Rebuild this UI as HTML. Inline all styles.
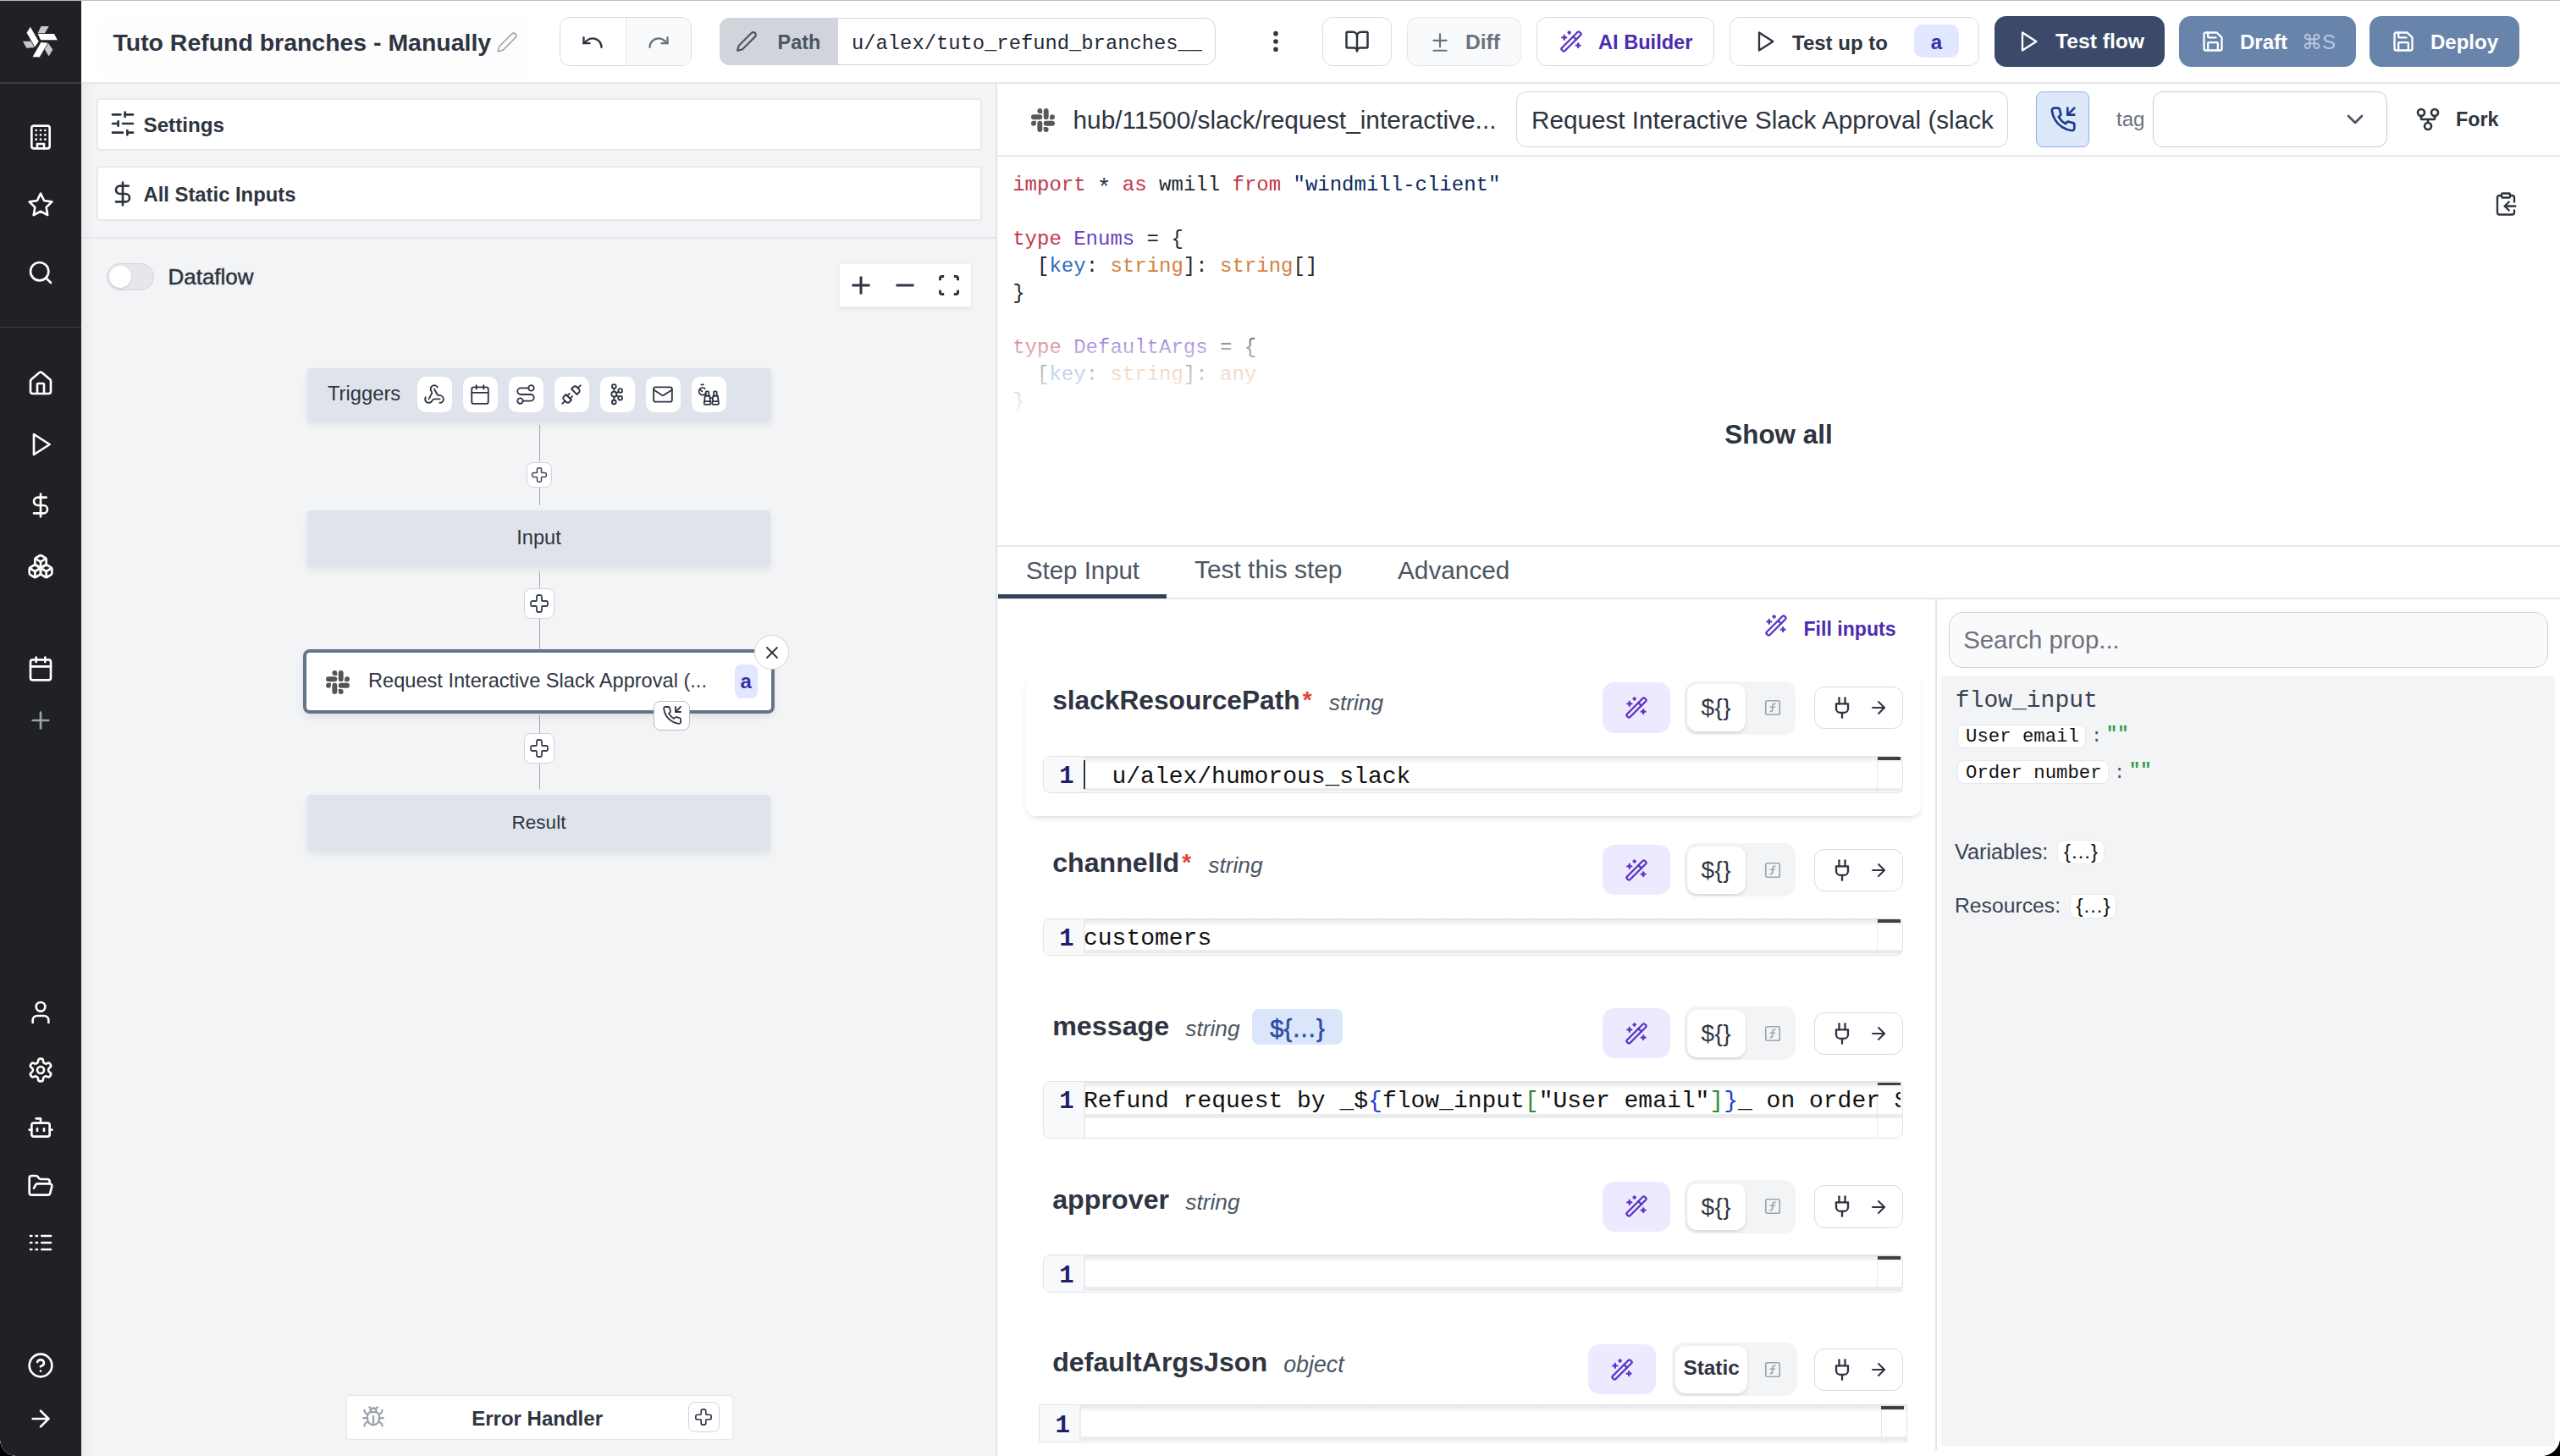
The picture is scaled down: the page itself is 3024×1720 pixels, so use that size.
<!DOCTYPE html>
<html><head><meta charset="utf-8">
<style>
html,body{margin:0;padding:0;background:#000;overflow:hidden;}
body{width:3024px;height:1720px;}
#app{position:relative;width:3024px;height:1720px;overflow:hidden;border-radius:0 0 22px 20px;font-family:"Liberation Sans",sans-serif;color:#2e3440;background:#fff;}
.a{position:absolute;}
svg{display:block;overflow:visible;}
.ic{fill:none;stroke:currentColor;stroke-linecap:round;stroke-linejoin:round;}
.t{white-space:pre;line-height:1;}
</style></head>
<body><div id="app">
<div class="a" style="box-sizing:border-box;left:0px;top:0px;width:3024px;height:1720px;background:#fff;border-radius:0px;"></div>
<div class="a" style="box-sizing:border-box;left:96px;top:98px;width:1081px;height:1622px;background:#f3f4f6;border-radius:0px;"></div>
<div class="a" style="box-sizing:border-box;left:1176px;top:98px;width:2px;height:1622px;background:#e1e3e6;border-radius:0px;"></div>
<div class="a" style="box-sizing:border-box;left:96px;top:98px;width:16px;height:1622px;background:transparent;border-radius:0px;background:linear-gradient(to right, rgba(0,0,0,.035), rgba(0,0,0,0));"></div>
<div class="a" style="box-sizing:border-box;left:0px;top:0px;width:96px;height:1720px;background:#202124;border-radius:0px;border-bottom-left-radius:18px;"></div>
<svg class="a" style="left:24px;top:24px" width="48" height="48" viewBox="0 0 24 24"><g id="wmlogo"><polygon points="10.29,7.98 19.96,7.98 21.93,11.6 12.04,11.6" fill="#fff"/><polygon points="10.29,7.65 12.26,3.47 16.88,3.47 14.46,7.65" fill="#c9c9c9"/></g><use href="#wmlogo" transform="rotate(120 11.71 12.37)"/><use href="#wmlogo" transform="rotate(240 11.71 12.37)"/></svg>
<div class="a" style="box-sizing:border-box;left:0px;top:97px;width:96px;height:2px;background:#3d3e44;border-radius:0px;"></div>
<div class="a" style="box-sizing:border-box;left:0px;top:386px;width:96px;height:1px;background:#3d3e44;border-radius:0px;"></div>
<svg class="a ic" style="left:32px;top:146px;color:#fff;stroke-width:2;" width="32" height="32" viewBox="0 0 24 24"><rect width="16" height="20" x="4" y="2" rx="2" ry="2"/><path d="M9 22v-4h6v4"/><path d="M8 6h.01"/><path d="M16 6h.01"/><path d="M12 6h.01"/><path d="M12 10h.01"/><path d="M12 14h.01"/><path d="M16 10h.01"/><path d="M16 14h.01"/><path d="M8 10h.01"/><path d="M8 14h.01"/></svg>
<svg class="a ic" style="left:32px;top:226px;color:#fff;stroke-width:2;" width="32" height="32" viewBox="0 0 24 24"><polygon points="12 2 15.09 8.26 22 9.27 17 14.14 18.18 21.02 12 17.77 5.82 21.02 7 14.14 2 9.27 8.91 8.26 12 2"/></svg>
<svg class="a ic" style="left:32px;top:306px;color:#fff;stroke-width:2;" width="32" height="32" viewBox="0 0 24 24"><circle cx="11" cy="11" r="8"/><path d="m21 21-4.3-4.3"/></svg>
<svg class="a ic" style="left:32px;top:437.2px;color:#fff;stroke-width:2;" width="32" height="32" viewBox="0 0 24 24"><path d="M15 21v-8a1 1 0 0 0-1-1h-4a1 1 0 0 0-1 1v8"/><path d="M3 10a2 2 0 0 1 .709-1.528l7-5.999a2 2 0 0 1 2.582 0l7 5.999A2 2 0 0 1 21 10v9a2 2 0 0 1-2 2H5a2 2 0 0 1-2-2z"/></svg>
<svg class="a ic" style="left:32px;top:508.6px;color:#fff;stroke-width:2;" width="32" height="32" viewBox="0 0 24 24"><polygon points="6 3 20 12 6 21 6 3"/></svg>
<svg class="a ic" style="left:32px;top:580.8px;color:#fff;stroke-width:2;" width="32" height="32" viewBox="0 0 24 24"><line x1="12" x2="12" y1="2" y2="22"/><path d="M17 5H9.5a3.5 3.5 0 0 0 0 7h5a3.5 3.5 0 0 1 0 7H6"/></svg>
<svg class="a ic" style="left:32px;top:653px;color:#fff;stroke-width:2;" width="32" height="32" viewBox="0 0 24 24"><path d="M2.97 12.92A2 2 0 0 0 2 14.63v3.24a2 2 0 0 0 .97 1.71l3 1.8a2 2 0 0 0 2.06 0L12 19v-5.5l-5-3-4.03 2.42Z"/><path d="m7 16.5-4.74-2.85"/><path d="m7 16.5 5-3"/><path d="M7 16.5v5.17"/><path d="M12 13.5V19l3.970 2.38a2 2 0 0 0 2.06 0l3-1.8a2 2 0 0 0 .97-1.710v-3.24a2 2 0 0 0-.97-1.71L17 10.5l-5 3Z"/><path d="m17 16.5-5-3"/><path d="m17 16.5 4.74-2.85"/><path d="M17 16.5v5.17"/><path d="M7.97 4.42A2 2 0 0 0 7 6.13v4.37l5 3 5-3V6.13a2 2 0 0 0-.97-1.71l-3-1.8a2 2 0 0 0-2.06 0l-3 1.8Z"/><path d="M12 8 7.26 5.15"/><path d="m12 8 4.74-2.85"/><path d="M12 13.5V8"/></svg>
<svg class="a ic" style="left:32px;top:774px;color:#fff;stroke-width:2;" width="32" height="32" viewBox="0 0 24 24"><path d="M8 2v4"/><path d="M16 2v4"/><rect width="18" height="18" x="3" y="4" rx="2"/><path d="M3 10h18"/></svg>
<svg class="a ic" style="left:32px;top:835.4px;color:#9ca3af;stroke-width:2;" width="32" height="32" viewBox="0 0 24 24"><path d="M5 12h14"/><path d="M12 5v14"/></svg>
<svg class="a ic" style="left:32px;top:1180px;color:#fff;stroke-width:2;" width="32" height="32" viewBox="0 0 24 24"><path d="M19 21v-2a4 4 0 0 0-4-4H9a4 4 0 0 0-4 4v2"/><circle cx="12" cy="7" r="4"/></svg>
<svg class="a ic" style="left:32px;top:1247.6px;color:#fff;stroke-width:2;" width="32" height="32" viewBox="0 0 24 24"><path d="M12.22 2h-.44a2 2 0 0 0-2 2v.18a2 2 0 0 1-1 1.73l-.43.25a2 2 0 0 1-2 0l-.15-.08a2 2 0 0 0-2.73.73l-.22.38a2 2 0 0 0 .73 2.73l.15.1a2 2 0 0 1 1 1.72v.51a2 2 0 0 1-1 1.74l-.15.09a2 2 0 0 0-.73 2.730l.22.38a2 2 0 0 0 2.73.73l.15-.08a2 2 0 0 1 2 0l.43.25a2 2 0 0 1 1 1.73V20a2 2 0 0 0 2 2h.44a2 2 0 0 0 2-2v-.18a2 2 0 0 1 1-1.73l.43-.25a2 2 0 0 1 2 0l.15.08a2 2 0 0 0 2.73-.73l.22-.39a2 2 0 0 0-.73-2.73l-.15-.08a2 2 0 0 1-1-1.74v-.5a2 2 0 0 1 1-1.74l.15-.09a2 2 0 0 0 .73-2.73l-.22-.38a2 2 0 0 0-2.73-.73l-.15.08a2 2 0 0 1-2 0l-.43-.25a2 2 0 0 1-1-1.73V4a2 2 0 0 0-2-2z"/><circle cx="12" cy="12" r="3"/></svg>
<svg class="a ic" style="left:32px;top:1316px;color:#fff;stroke-width:2;" width="32" height="32" viewBox="0 0 24 24"><path d="M12 8V4H8"/><rect width="16" height="12" x="4" y="8" rx="2"/><path d="M2 14h2"/><path d="M20 14h2"/><path d="M15 13v2"/><path d="M9 13v2"/></svg>
<svg class="a ic" style="left:32px;top:1384.8px;color:#fff;stroke-width:2;" width="32" height="32" viewBox="0 0 24 24"><path d="m6 14 1.5-2.9A2 2 0 0 1 9.24 10H20a2 2 0 0 1 1.94 2.5l-1.54 6a2 2 0 0 1-1.95 1.5H4a2 2 0 0 1-2-2V5a2 2 0 0 1 2-2h3.9a2 2 0 0 1 1.69.9l.81 1.2a2 2 0 0 0 1.67.9H18a2 2 0 0 1 2 2v2"/></svg>
<svg class="a ic" style="left:32px;top:1452px;color:#fff;stroke-width:2;" width="32" height="32" viewBox="0 0 24 24"><path d="M13 12h8"/><path d="M13 18h8"/><path d="M13 6h8"/><path d="M3 12h1"/><path d="M3 18h1"/><path d="M3 6h1"/><path d="M8 12h1"/><path d="M8 18h1"/><path d="M8 6h1"/></svg>
<svg class="a ic" style="left:32px;top:1597.4px;color:#fff;stroke-width:2;" width="32" height="32" viewBox="0 0 24 24"><circle cx="12" cy="12" r="10"/><path d="M9.09 9a3 3 0 0 1 5.83 1c0 2-3 3-3 3"/><path d="M12 17h.01"/></svg>
<svg class="a ic" style="left:32px;top:1659.8px;color:#fff;stroke-width:2;" width="32" height="32" viewBox="0 0 24 24"><path d="M5 12h14"/><path d="m12 5 7 7-7 7"/></svg>
<div class="a" style="box-sizing:border-box;left:96px;top:96.5px;width:2928px;height:2px;background:#e6e7ea;border-radius:0px;"></div>
<div class="a" style="box-sizing:border-box;left:116px;top:22px;width:510px;height:70px;background:#fdfdfe;border-radius:12px;"></div>
<div class="a t" style="left:133.5px;top:35.52px;font-size:28.44px;font-weight:700;color:#2e3440;font-family:'Liberation Sans',sans-serif;">Tuto Refund branches - Manually</div>
<svg class="a ic" style="left:586px;top:37.4px;color:#a3a7ae;stroke-width:1.5;" width="26" height="26" viewBox="0 0 24 24"><path d="M21.174 6.812a1 1 0 0 0-3.986-3.987L3.842 16.174a2 2 0 0 0-.5.83l-1.321 4.352a.5.5 0 0 0 .623.622l4.353-1.32a2 2 0 0 0 .83-.497z"/></svg>
<div class="a" style="box-sizing:border-box;left:661px;top:20px;width:156px;height:58px;background:#fff;border-radius:12px;border:1px solid #d9dce1;"></div>
<div class="a" style="box-sizing:border-box;left:739px;top:21px;width:77px;height:56px;background:#f9fafb;border-radius:0px;border-radius:0 12px 12px 0;"></div>
<div class="a" style="box-sizing:border-box;left:738.5px;top:21px;width:1px;height:56px;background:#e5e7eb;border-radius:0px;"></div>
<svg class="a ic" style="left:685.5px;top:36px;color:#2e3440;stroke-width:2;" width="28" height="28" viewBox="0 0 24 24"><path d="M3 7v6h6"/><path d="M21 17a9 9 0 0 0-9-9 9 9 0 0 0-6 2.3L3 13"/></svg>
<svg class="a ic" style="left:763.5px;top:36px;color:#6b7280;stroke-width:2;" width="28" height="28" viewBox="0 0 24 24"><path d="M21 7v6h-6"/><path d="M3 17a9 9 0 0 1 9-9 9 9 0 0 1 6 2.3l3 2.7"/></svg>
<div class="a" style="box-sizing:border-box;left:850px;top:21px;width:586px;height:56px;background:#fff;border-radius:12px;border:1px solid #d1d5db;"></div>
<div class="a" style="box-sizing:border-box;left:850px;top:21px;width:139.5px;height:56px;background:#d1d5db;border-radius:0px;border-radius:12px 0 0 12px;"></div>
<svg class="a ic" style="left:869px;top:36px;color:#4b5563;stroke-width:2;" width="26" height="26" viewBox="0 0 24 24"><path d="M21.174 6.812a1 1 0 0 0-3.986-3.987L3.842 16.174a2 2 0 0 0-.5.83l-1.321 4.352a.5.5 0 0 0 .623.622l4.353-1.32a2 2 0 0 0 .83-.497z"/></svg>
<div class="a t" style="left:918.5px;top:38.76px;font-size:23.44px;font-weight:700;color:#4b5563;font-family:'Liberation Sans',sans-serif;">Path</div>
<div class="a t" style="left:1006px;top:40.36px;font-size:23.8px;font-weight:400;color:#1f2937;font-family:'Liberation Mono',monospace;">u/alex/tuto_refund_branches__</div>
<svg class="a ic" style="left:1491px;top:33px;color:#2e3440;stroke-width:2.2;" width="32" height="32" viewBox="0 0 24 24"><circle cx="12" cy="12" r="1"/><circle cx="12" cy="5" r="1"/><circle cx="12" cy="19" r="1"/></svg>
<div class="a" style="box-sizing:border-box;left:1562px;top:20px;width:82px;height:58px;background:#fff;border-radius:12px;border:1px solid #d9dce1;"></div>
<svg class="a ic" style="left:1588px;top:34px;color:#2e3440;stroke-width:2;" width="30" height="30" viewBox="0 0 24 24"><path d="M12 7v14"/><path d="M3 18a1 1 0 0 1-1-1V4a1 1 0 0 1 1-1h5a4 4 0 0 1 4 4 4 4 0 0 1 4-4h5a1 1 0 0 1 1 1v13a1 1 0 0 1-1 1h-6a3 3 0 0 0-3 3 3 3 0 0 0-3-3z"/></svg>
<div class="a" style="box-sizing:border-box;left:1662px;top:20px;width:135px;height:58px;background:#f9fafb;border-radius:12px;border:1px solid #e5e7eb;"></div>
<svg class="a ic" style="left:1687.5px;top:37px;color:#6b7280;stroke-width:2;" width="26" height="26" viewBox="0 0 24 24"><path d="M12 3v14"/><path d="M5 10h14"/><path d="M5 21h14"/></svg>
<div class="a t" style="left:1731px;top:38.18px;font-size:24.6px;font-weight:700;color:#6b7280;font-family:'Liberation Sans',sans-serif;">Diff</div>
<div class="a" style="box-sizing:border-box;left:1815px;top:20px;width:210px;height:58px;background:#fff;border-radius:12px;border:1px solid #d9dce1;"></div>
<svg class="a ic" style="left:1842px;top:35px;color:#5b34c4;stroke-width:2;" width="28" height="28" viewBox="0 0 24 24"><path d="m21.64 3.64-1.28-1.28a1.21 1.21 0 0 0-1.72 0L2.36 18.64a1.21 1.21 0 0 0 0 1.72l1.28 1.28a1.2 1.2 0 0 0 1.72 0L21.64 5.36a1.2 1.2 0 0 0 0-1.72"/><path d="m14 7 3 3"/><path d="M5 6v4"/><path d="M19 14v4"/><path d="M10 2v2"/><path d="M7 8H3"/><path d="M21 16h-4"/><path d="M11 3H9"/></svg>
<div class="a t" style="left:1888px;top:39.02px;font-size:23.6px;font-weight:700;color:#4c2bb0;font-family:'Liberation Sans',sans-serif;">AI Builder</div>
<div class="a" style="box-sizing:border-box;left:2043px;top:20px;width:295px;height:58px;background:#fff;border-radius:12px;border:1px solid #d9dce1;"></div>
<svg class="a ic" style="left:2071px;top:35px;color:#2e3440;stroke-width:2;" width="28" height="28" viewBox="0 0 24 24"><polygon points="6 3 20 12 6 21 6 3"/></svg>
<div class="a t" style="left:2117px;top:38.66px;font-size:24.02px;font-weight:700;color:#2e3440;font-family:'Liberation Sans',sans-serif;">Test up to</div>
<div class="a" style="box-sizing:border-box;left:2261px;top:29px;width:53px;height:39px;background:#e0e7ff;border-radius:10px;"></div>
<div class="a t" style="left:2287.5px;top:37.68px;font-size:24px;font-weight:700;color:#3730a3;font-family:'Liberation Sans',sans-serif;transform:translateX(-50%);">a</div>
<div class="a" style="box-sizing:border-box;left:2356px;top:19px;width:201px;height:59.5px;background:#3b4a6a;border-radius:14px;"></div>
<svg class="a ic" style="left:2382px;top:35px;color:#fff;stroke-width:2;" width="28" height="28" viewBox="0 0 24 24"><polygon points="6 3 20 12 6 21 6 3"/></svg>
<div class="a t" style="left:2428px;top:37.12px;font-size:24.66px;font-weight:700;color:#fff;font-family:'Liberation Sans',sans-serif;">Test flow</div>
<div class="a" style="box-sizing:border-box;left:2574px;top:19px;width:208.8px;height:59.5px;background:#6884ab;border-radius:14px;"></div>
<svg class="a ic" style="left:2600px;top:35px;color:#fff;stroke-width:2;" width="28" height="28" viewBox="0 0 24 24"><path d="M15.2 3a2 2 0 0 1 1.4.6l3.8 3.8a2 2 0 0 1 .6 1.4V19a2 2 0 0 1-2 2H5a2 2 0 0 1-2-2V5a2 2 0 0 1 2-2z"/><path d="M17 21v-7a1 1 0 0 0-1-1H8a1 1 0 0 0-1 1v7"/><path d="M7 3v4a1 1 0 0 0 1 1h7"/></svg>
<div class="a t" style="left:2646px;top:37.68px;font-size:24px;font-weight:700;color:#fff;font-family:'Liberation Sans',sans-serif;">Draft</div>
<div class="a t" style="left:2719px;top:37.68px;font-size:24px;font-weight:400;color:#b9c8de;font-family:'Liberation Sans',sans-serif;">⌘S</div>
<div class="a" style="box-sizing:border-box;left:2799px;top:19px;width:177px;height:59.5px;background:#6884ab;border-radius:14px;"></div>
<svg class="a ic" style="left:2825px;top:35px;color:#fff;stroke-width:2;" width="28" height="28" viewBox="0 0 24 24"><path d="M15.2 3a2 2 0 0 1 1.4.6l3.8 3.8a2 2 0 0 1 .6 1.4V19a2 2 0 0 1-2 2H5a2 2 0 0 1-2-2V5a2 2 0 0 1 2-2z"/><path d="M17 21v-7a1 1 0 0 0-1-1H8a1 1 0 0 0-1 1v7"/><path d="M7 3v4a1 1 0 0 0 1 1h7"/></svg>
<div class="a t" style="left:2871px;top:37.68px;font-size:24px;font-weight:700;color:#fff;font-family:'Liberation Sans',sans-serif;">Deploy</div>
<div class="a" style="box-sizing:border-box;left:113.5px;top:116px;width:1046.5px;height:61.5px;background:#fff;border-radius:4px;border:2px solid #e8e9ec;"></div>
<svg class="a ic" style="left:129.2px;top:130.4px;color:#2e3440;stroke-width:2;" width="32" height="32" viewBox="0 0 24 24"><line x1="21" x2="14" y1="4" y2="4"/><line x1="10" x2="3" y1="4" y2="4"/><line x1="21" x2="12" y1="12" y2="12"/><line x1="8" x2="3" y1="12" y2="12"/><line x1="21" x2="16" y1="20" y2="20"/><line x1="12" x2="3" y1="20" y2="20"/><line x1="14" x2="14" y1="2" y2="6"/><line x1="8" x2="8" y1="10" y2="14"/><line x1="16" x2="16" y1="18" y2="22"/></svg>
<div class="a t" style="left:169.5px;top:135.5px;font-size:24.2px;font-weight:700;color:#2e3440;font-family:'Liberation Sans',sans-serif;">Settings</div>
<div class="a" style="box-sizing:border-box;left:113.5px;top:196px;width:1046.5px;height:65px;background:#fff;border-radius:4px;border:2px solid #e8e9ec;"></div>
<svg class="a ic" style="left:129px;top:212.5px;color:#2e3440;stroke-width:2;" width="32" height="32" viewBox="0 0 24 24"><line x1="12" x2="12" y1="2" y2="22"/><path d="M17 5H9.5a3.5 3.5 0 0 0 0 7h5a3.5 3.5 0 0 1 0 7H6"/></svg>
<div class="a t" style="left:169.5px;top:218.34px;font-size:23.82px;font-weight:700;color:#2e3440;font-family:'Liberation Sans',sans-serif;">All Static Inputs</div>
<div class="a" style="box-sizing:border-box;left:96px;top:279.5px;width:1080px;height:2px;background:#e6e7ea;border-radius:0px;"></div>
<div class="a" style="box-sizing:border-box;left:126px;top:311px;width:56px;height:31.5px;background:#e5e7eb;border-radius:16px;border:1px solid #d1d5db;"></div>
<div class="a" style="box-sizing:border-box;left:129px;top:314px;width:26px;height:26px;background:#fff;border-radius:14px;box-shadow:0 1px 2px rgba(0,0,0,.15);"></div>
<div class="a t" style="left:198.5px;top:315.02px;font-size:25.96px;font-weight:400;color:#2e3440;font-family:'Liberation Sans',sans-serif;-webkit-text-stroke:0.5px #2e3440;">Dataflow</div>
<div class="a" style="box-sizing:border-box;left:991px;top:310.8px;width:156.5px;height:52.7px;background:#fff;border-radius:2px;border:1px solid #eceef1;box-shadow:0 2px 4px rgba(0,0,0,.06);"></div>
<svg class="a ic" style="left:999px;top:319px;color:#2e3440;stroke-width:2;stroke-linecap:butt;" width="36" height="36" viewBox="0 0 24 24"><path d="M5 12h14"/><path d="M12 5v14"/></svg>
<svg class="a ic" style="left:1050.5px;top:319px;color:#2e3440;stroke-width:2;stroke-linecap:butt;" width="36" height="36" viewBox="0 0 24 24"><path d="M5 12h14"/></svg>
<svg class="a ic" style="left:1106.8px;top:323px;color:#2e3440;stroke-width:2.6;stroke-linecap:butt;" width="28" height="28" viewBox="0 0 24 24"><path d="M3 7V5a2 2 0 0 1 2-2h2"/><path d="M17 3h2a2 2 0 0 1 2 2v2"/><path d="M21 17v2a2 2 0 0 1-2 2h-2"/><path d="M7 21H5a2 2 0 0 1-2-2v-2"/></svg>
<div class="a" style="box-sizing:border-box;left:636.5px;top:502px;width:1px;height:43px;background:#a3a7ae;border-radius:0px;"></div>
<div class="a" style="box-sizing:border-box;left:636.5px;top:576px;width:1px;height:21px;background:#a3a7ae;border-radius:0px;"></div>
<div class="a" style="box-sizing:border-box;left:636.5px;top:675px;width:1px;height:20px;background:#a3a7ae;border-radius:0px;"></div>
<div class="a" style="box-sizing:border-box;left:636.5px;top:731px;width:1px;height:36px;background:#a3a7ae;border-radius:0px;"></div>
<div class="a" style="box-sizing:border-box;left:636.5px;top:845px;width:1px;height:21px;background:#a3a7ae;border-radius:0px;"></div>
<div class="a" style="box-sizing:border-box;left:636.5px;top:902px;width:1px;height:30px;background:#a3a7ae;border-radius:0px;"></div>
<div class="a" style="box-sizing:border-box;left:362.5px;top:435px;width:548.7px;height:62.5px;background:#dfe4ec;border-radius:4px;box-shadow:0 4px 8px rgba(0,0,0,.08);"></div>
<div class="a t" style="left:387px;top:453.7px;font-size:23.74px;font-weight:400;color:#2e3440;font-family:'Liberation Sans',sans-serif;">Triggers</div>
<div class="a" style="box-sizing:border-box;left:492.5px;top:445px;width:41.5px;height:42px;background:#fff;border-radius:10px;"></div>
<svg class="a ic" style="left:500.3px;top:453px;color:#2e3440;stroke-width:1.7;" width="26" height="26" viewBox="0 0 24 24"><path d="M18 16.98h-5.99c-1.1 0-1.95.94-2.48 1.9A4 4 0 0 1 2 17c.01-.7.2-1.4.57-2"/><path d="m6 17 3.13-5.78c.53-.97.1-2.18-.5-3.1a4 4 0 1 1 6.89-4.06"/><path d="m12 6 3.13 5.73C15.66 12.7 16.9 13 18 13a4 4 0 0 1 0 8"/></svg>
<div class="a" style="box-sizing:border-box;left:546.5px;top:445px;width:41.5px;height:42px;background:#fff;border-radius:10px;"></div>
<svg class="a ic" style="left:554.3px;top:453px;color:#2e3440;stroke-width:1.7;" width="26" height="26" viewBox="0 0 24 24"><path d="M8 2v4"/><path d="M16 2v4"/><rect width="18" height="18" x="3" y="4" rx="2"/><path d="M3 10h18"/></svg>
<div class="a" style="box-sizing:border-box;left:600.5px;top:445px;width:41.5px;height:42px;background:#fff;border-radius:10px;"></div>
<svg class="a ic" style="left:608.3px;top:453px;color:#2e3440;stroke-width:1.7;" width="26" height="26" viewBox="0 0 24 24"><circle cx="6" cy="19" r="3"/><path d="M9 19h8.5a3.5 3.5 0 0 0 0-7h-11a3.5 3.5 0 0 1 0-7H15"/><circle cx="18" cy="5" r="3"/></svg>
<div class="a" style="box-sizing:border-box;left:654.5px;top:445px;width:41.5px;height:42px;background:#fff;border-radius:10px;"></div>
<svg class="a ic" style="left:662.3px;top:453px;color:#2e3440;stroke-width:1.7;" width="26" height="26" viewBox="0 0 24 24"><path d="m19 5 3-3"/><path d="m2 22 3-3"/><path d="M6.3 20.3a2.4 2.4 0 0 0 3.4 0L12 18l-6-6-2.3 2.3a2.4 2.4 0 0 0 0 3.4Z"/><path d="M7.5 13.5 10 11"/><path d="M10.5 16.5 13 14"/><path d="m12 6 6 6 2.3-2.3a2.4 2.4 0 0 0 0-3.4l-2.6-2.6a2.4 2.4 0 0 0-3.4 0Z"/></svg>
<div class="a" style="box-sizing:border-box;left:708.5px;top:445px;width:41.5px;height:42px;background:#fff;border-radius:10px;"></div>
<svg class="a ic" style="left:716.3px;top:453px;color:#2e3440;stroke-width:1.7;" width="26" height="26" viewBox="0 0 24 24"><circle cx="8.6" cy="3.2" r="2.2"/><circle cx="8.6" cy="11.7" r="2.8"/><circle cx="8.6" cy="20.4" r="2.2"/><circle cx="15.4" cy="7.8" r="2.2"/><circle cx="15.4" cy="15.9" r="2.2"/><path d="M8.6 5.4v3.5M8.6 14.5v3.7M11.1 10.4l2.4-1.4M11.1 13l2.4 1.6"/></svg>
<div class="a" style="box-sizing:border-box;left:762.5px;top:445px;width:41.5px;height:42px;background:#fff;border-radius:10px;"></div>
<svg class="a ic" style="left:770.3px;top:453px;color:#2e3440;stroke-width:1.7;" width="26" height="26" viewBox="0 0 24 24"><rect width="20" height="16" x="2" y="4" rx="2"/><path d="m22 7-8.97 5.7a1.94 1.94 0 0 1-2.06 0L2 7"/></svg>
<div class="a" style="box-sizing:border-box;left:816.5px;top:445px;width:41.5px;height:42px;background:#fff;border-radius:10px;"></div>
<svg class="a ic" style="left:824.3px;top:453px;color:#2e3440;stroke-width:1.7;" width="26" height="26" viewBox="0 0 24 24"><path d="M7.9 5.6A3.9 3.9 0 1 0 8.4 11.2"/><path d="M4 1.3h2.4"/><path d="M3.4 7.4l1.5 1.2"/><path d="M9 13.6V9.6a.9.9 0 0 1 .9-.9h1.4a.9.9 0 0 1 .9.9v4"/><path d="M17.7 13.6V9.6a.9.9 0 0 1 .9-.9h1.4a.9.9 0 0 1 .9.9v4"/><path d="M8.2 13.6h5l1 8.2a1 1 0 0 1-1 1.1H8.2a1 1 0 0 1-1-1.1z"/><path d="M17 13.6h5l1 8.2a1 1 0 0 1-1 1.1H17a1 1 0 0 1-1-1.1z"/><path d="M13.6 15.8h2.8"/><path d="M7.6 19.5h6M16.4 19.5h6"/></svg>
<div class="a" style="box-sizing:border-box;left:622px;top:546px;width:30px;height:30px;background:#fff;border-radius:8px;border:1px solid #cfd3d9;"></div>
<svg class="a ic" style="left:627px;top:551px;color:#3b4252;stroke-width:1.8;" width="20" height="20" viewBox="0 0 24 24"><path d="M4 9a2 2 0 0 0-2 2v2a2 2 0 0 0 2 2h4a1 1 0 0 1 1 1v4a2 2 0 0 0 2 2h2a2 2 0 0 0 2-2v-4a1 1 0 0 1 1-1h4a2 2 0 0 0 2-2v-2a2 2 0 0 0-2-2h-4a1 1 0 0 1-1-1V4a2 2 0 0 0-2-2h-2a2 2 0 0 0-2 2v4a1 1 0 0 1-1 1z"/></svg>
<div class="a" style="box-sizing:border-box;left:362.5px;top:603.2px;width:547.5px;height:65.6px;background:#dfe4ec;border-radius:4px;box-shadow:0 4px 8px rgba(0,0,0,.08);"></div>
<div class="a t" style="left:636.5px;top:623.82px;font-size:23.6px;font-weight:400;color:#2e3440;font-family:'Liberation Sans',sans-serif;transform:translateX(-50%);">Input</div>
<div class="a" style="box-sizing:border-box;left:618.8px;top:695px;width:36.7px;height:36.2px;background:#fff;border-radius:8px;border:1px solid #cfd3d9;"></div>
<svg class="a ic" style="left:625.14px;top:701.1px;color:#3b4252;stroke-width:1.8;" width="24" height="24" viewBox="0 0 24 24"><path d="M4 9a2 2 0 0 0-2 2v2a2 2 0 0 0 2 2h4a1 1 0 0 1 1 1v4a2 2 0 0 0 2 2h2a2 2 0 0 0 2-2v-4a1 1 0 0 1 1-1h4a2 2 0 0 0 2-2v-2a2 2 0 0 0-2-2h-4a1 1 0 0 1-1-1V4a2 2 0 0 0-2-2h-2a2 2 0 0 0-2 2v4a1 1 0 0 1-1 1z"/></svg>
<div class="a" style="box-sizing:border-box;left:358.2px;top:767px;width:557.3px;height:75.5px;background:#fff;border-radius:8px;border:4px solid #64748b;box-shadow:0 4px 8px rgba(0,0,0,.08);"></div>
<svg class="a" style="left:385px;top:792px" width="28" height="28" viewBox="0 0 24 24" fill="#555"><path d="M5.042 15.165a2.528 2.528 0 0 1-2.52 2.523A2.528 2.528 0 0 1 0 15.165a2.527 2.527 0 0 1 2.522-2.52h2.52v2.52zM6.313 15.165a2.527 2.527 0 0 1 2.521-2.52 2.527 2.527 0 0 1 2.521 2.52v6.313A2.528 2.528 0 0 1 8.834 24a2.528 2.528 0 0 1-2.521-2.522v-6.313zM8.834 5.042a2.528 2.528 0 0 1-2.521-2.52A2.528 2.528 0 0 1 8.834 0a2.528 2.528 0 0 1 2.521 2.522v2.52H8.834zM8.834 6.313a2.528 2.528 0 0 1 2.521 2.521 2.528 2.528 0 0 1-2.521 2.521H2.522A2.528 2.528 0 0 1 0 8.834a2.528 2.528 0 0 1 2.522-2.521h6.312zM18.956 8.834a2.528 2.528 0 0 1 2.522-2.521A2.528 2.528 0 0 1 24 8.834a2.528 2.528 0 0 1-2.522 2.521h-2.522V8.834zM17.688 8.834a2.528 2.528 0 0 1-2.523 2.521 2.527 2.527 0 0 1-2.52-2.521V2.522A2.527 2.527 0 0 1 15.165 0a2.528 2.528 0 0 1 2.523 2.522v6.312zM15.165 18.956a2.528 2.528 0 0 1 2.523 2.522A2.528 2.528 0 0 1 15.165 24a2.527 2.527 0 0 1-2.52-2.522v-2.522h2.52zM15.165 17.688a2.527 2.527 0 0 1-2.52-2.523 2.526 2.526 0 0 1 2.52-2.52h6.313A2.527 2.527 0 0 1 24 15.165a2.528 2.528 0 0 1-2.522 2.523h-6.313z"/></svg>
<div class="a t" style="left:435px;top:793.02px;font-size:23.6px;font-weight:400;color:#2e3440;font-family:'Liberation Sans',sans-serif;">Request Interactive Slack Approval (...</div>
<div class="a" style="box-sizing:border-box;left:867.5px;top:785px;width:27.5px;height:39.5px;background:#e0e7ff;border-radius:8px;"></div>
<div class="a t" style="left:881.2px;top:792.68px;font-size:24px;font-weight:700;color:#3730a3;font-family:'Liberation Sans',sans-serif;transform:translateX(-50%);">a</div>
<div class="a" style="box-sizing:border-box;left:891.2px;top:750px;width:41.3px;height:41.2px;background:#fff;border-radius:22px;border:1px solid #d1d5db;"></div>
<svg class="a ic" style="left:899.8px;top:758.6px;color:#2e3440;stroke-width:1.8;" width="24" height="24" viewBox="0 0 24 24"><path d="M18 6 6 18"/><path d="m6 6 12 12"/></svg>
<div class="a" style="box-sizing:border-box;left:772px;top:827.5px;width:43px;height:35px;background:#fff;border-radius:8px;border:1px solid #b7bcc4;"></div>
<svg class="a ic" style="left:781.5px;top:833px;color:#2e3440;stroke-width:1.8;" width="24" height="24" viewBox="0 0 24 24"><polyline points="16 2 16 8 22 8"/><line x1="22" x2="16" y1="2" y2="8"/><path d="M22 16.92v3a2 2 0 0 1-2.18 2 19.79 19.790 0 0 1-8.63-3.07 19.5 19.5 0 0 1-6-6 19.79 19.79 0 0 1-3.07-8.67A2 2 0 0 1 4.11 2h3a2 2 0 0 1 2 1.72 12.84 12.84 0 0 0 .7 2.81 2 2 0 0 1-.45 2.11L8.09 9.91a16 16 0 0 0 6 6l1.27-1.27a2 2 0 0 1 2.11-.45 12.84 12.84 0 0 0 2.81.7A2 2 0 0 1 22 16.92z"/></svg>
<div class="a" style="box-sizing:border-box;left:618.8px;top:866px;width:36.7px;height:36px;background:#fff;border-radius:8px;border:1px solid #cfd3d9;"></div>
<svg class="a ic" style="left:625.14px;top:872px;color:#3b4252;stroke-width:1.8;" width="24" height="24" viewBox="0 0 24 24"><path d="M4 9a2 2 0 0 0-2 2v2a2 2 0 0 0 2 2h4a1 1 0 0 1 1 1v4a2 2 0 0 0 2 2h2a2 2 0 0 0 2-2v-4a1 1 0 0 1 1-1h4a2 2 0 0 0 2-2v-2a2 2 0 0 0-2-2h-4a1 1 0 0 1-1-1V4a2 2 0 0 0-2-2h-2a2 2 0 0 0-2 2v4a1 1 0 0 1-1 1z"/></svg>
<div class="a" style="box-sizing:border-box;left:362.5px;top:939.2px;width:547.5px;height:65.8px;background:#dfe4ec;border-radius:4px;box-shadow:0 4px 8px rgba(0,0,0,.08);"></div>
<div class="a t" style="left:636.5px;top:960.94px;font-size:22.5px;font-weight:400;color:#2e3440;font-family:'Liberation Sans',sans-serif;transform:translateX(-50%);">Result</div>
<div class="a" style="box-sizing:border-box;left:408.8px;top:1648px;width:457.2px;height:52.6px;background:#fff;border-radius:4px;border:1px solid #e5e7eb;"></div>
<svg class="a ic" style="left:427px;top:1660px;color:#9ca3af;stroke-width:2;" width="28" height="28" viewBox="0 0 24 24"><path d="m8 2 1.88 1.88"/><path d="M14.12 3.88 16 2"/><path d="M9 7.13v-1a3.003 3.003 0 1 1 6 0v1"/><path d="M12 20c-3.3 0-6-2.7-6-6v-3a4 4 0 0 1 4-4h4a4 4 0 0 1 4 4v3c0 3.3-2.7 6-6 6"/><path d="M12 20v-9"/><path d="M6.53 9C4.6 8.8 3 7.1 3 5"/><path d="M6 13H2"/><path d="M3 21c0-2.1 1.7-3.9 3.8-4"/><path d="M20.97 5c0 2.1-1.6 3.8-3.5 4"/><path d="M22 13h-4"/><path d="M17.2 17c2.1.1 3.8 1.9 3.8 4"/></svg>
<div class="a t" style="left:557.2px;top:1663.66px;font-size:24.02px;font-weight:700;color:#2e3440;font-family:'Liberation Sans',sans-serif;">Error Handler</div>
<div class="a" style="box-sizing:border-box;left:812.8px;top:1656px;width:37.2px;height:36px;background:#fff;border-radius:8px;border:1px solid #cfd3d9;"></div>
<svg class="a ic" style="left:820.4px;top:1663px;color:#2e3440;stroke-width:1.8;" width="22" height="22" viewBox="0 0 24 24"><path d="M4 9a2 2 0 0 0-2 2v2a2 2 0 0 0 2 2h4a1 1 0 0 1 1 1v4a2 2 0 0 0 2 2h2a2 2 0 0 0 2-2v-4a1 1 0 0 1 1-1h4a2 2 0 0 0 2-2v-2a2 2 0 0 0-2-2h-4a1 1 0 0 1-1-1V4a2 2 0 0 0-2-2h-2a2 2 0 0 0-2 2v4a1 1 0 0 1-1 1z"/></svg>
<div class="a" style="box-sizing:border-box;left:1178px;top:182.5px;width:1846px;height:2px;background:#e6e7ea;border-radius:0px;"></div>
<svg class="a" style="left:1218px;top:128px" width="28" height="28" viewBox="0 0 24 24" fill="#595959"><path d="M5.042 15.165a2.528 2.528 0 0 1-2.52 2.523A2.528 2.528 0 0 1 0 15.165a2.527 2.527 0 0 1 2.522-2.52h2.52v2.52zM6.313 15.165a2.527 2.527 0 0 1 2.521-2.52 2.527 2.527 0 0 1 2.521 2.52v6.313A2.528 2.528 0 0 1 8.834 24a2.528 2.528 0 0 1-2.521-2.522v-6.313zM8.834 5.042a2.528 2.528 0 0 1-2.521-2.52A2.528 2.528 0 0 1 8.834 0a2.528 2.528 0 0 1 2.521 2.522v2.52H8.834zM8.834 6.313a2.528 2.528 0 0 1 2.521 2.521 2.528 2.528 0 0 1-2.521 2.521H2.522A2.528 2.528 0 0 1 0 8.834a2.528 2.528 0 0 1 2.522-2.521h6.312zM18.956 8.834a2.528 2.528 0 0 1 2.522-2.521A2.528 2.528 0 0 1 24 8.834a2.528 2.528 0 0 1-2.522 2.521h-2.522V8.834zM17.688 8.834a2.528 2.528 0 0 1-2.523 2.521 2.527 2.527 0 0 1-2.52-2.521V2.522A2.527 2.527 0 0 1 15.165 0a2.528 2.528 0 0 1 2.523 2.522v6.312zM15.165 18.956a2.528 2.528 0 0 1 2.523 2.522A2.528 2.528 0 0 1 15.165 24a2.527 2.527 0 0 1-2.52-2.522v-2.522h2.52zM15.165 17.688a2.527 2.527 0 0 1-2.52-2.523 2.526 2.526 0 0 1 2.52-2.52h6.313A2.527 2.527 0 0 1 24 15.165a2.528 2.528 0 0 1-2.522 2.523h-6.313z"/></svg>
<div class="a t" style="left:1267.5px;top:127.26px;font-size:29.82px;font-weight:400;color:#2e3440;font-family:'Liberation Sans',sans-serif;">hub/11500/slack/request_interactive...</div>
<div class="a" style="box-sizing:border-box;left:1791px;top:107.5px;width:581px;height:66.5px;background:#fff;border-radius:12px;border:1px solid #d1d5db;"></div>
<div class="a t" style="left:1809px;top:127.36px;font-size:29.68px;font-weight:400;color:#2e3440;font-family:'Liberation Sans',sans-serif;">Request Interactive Slack Approval (slack</div>
<div class="a" style="box-sizing:border-box;left:2405.2px;top:107.5px;width:63.3px;height:66.7px;background:#dde8fb;border-radius:8px;border:1px solid #8fb0e6;"></div>
<svg class="a ic" style="left:2420.8px;top:124.8px;color:#1e3a8a;stroke-width:2;" width="32" height="32" viewBox="0 0 24 24"><polyline points="16 2 16 8 22 8"/><line x1="22" x2="16" y1="2" y2="8"/><path d="M22 16.92v3a2 2 0 0 1-2.18 2 19.79 19.790 0 0 1-8.63-3.07 19.5 19.5 0 0 1-6-6 19.79 19.79 0 0 1-3.07-8.67A2 2 0 0 1 4.11 2h3a2 2 0 0 1 2 1.72 12.84 12.84 0 0 0 .7 2.81 2 2 0 0 1-.45 2.11L8.09 9.91a16 16 0 0 0 6 6l1.27-1.27a2 2 0 0 1 2.11-.45 12.84 12.84 0 0 0 2.81.7A2 2 0 0 1 22 16.92z"/></svg>
<div class="a t" style="left:2500px;top:128.6px;font-size:24.1px;font-weight:400;color:#6b7280;font-family:'Liberation Sans',sans-serif;">tag</div>
<div class="a" style="box-sizing:border-box;left:2542.8px;top:107.5px;width:277.2px;height:66.7px;background:#fff;border-radius:12px;border:1px solid #c9cdd3;"></div>
<svg class="a ic" style="left:2765.5px;top:125px;color:#4b5563;stroke-width:2;" width="32" height="32" viewBox="0 0 24 24"><path d="m6 9 6 6 6-6"/></svg>
<svg class="a ic" style="left:2852px;top:125px;color:#2e3440;stroke-width:2;" width="32" height="32" viewBox="0 0 24 24"><circle cx="12" cy="18" r="3"/><circle cx="6" cy="6" r="3"/><circle cx="18" cy="6" r="3"/><path d="M18 9v2c0 .6-.4 1-1 1H7c-.6 0-1-.4-1-1V9"/><path d="M12 12v3"/></svg>
<div class="a t" style="left:2901px;top:129.78px;font-size:23.3px;font-weight:700;color:#2e3440;font-family:'Liberation Sans',sans-serif;">Fork</div>
<div class="a t" style="left:1196.2px;top:207.22px;font-size:24px;font-weight:400;color:#24292e;font-family:'Liberation Mono',monospace;"><span style="color:#c0394a">import</span><span style="color:#2e3440"> </span><span style="color:#2e3440;position:relative;top:5px;font-size:28px;margin:0 -1.2px;line-height:0">*</span><span style="color:#2e3440"> </span><span style="color:#c0394a">as</span><span style="color:#24292e"> wmill </span><span style="color:#c0394a">from</span><span style="color:#0b2a5c"> &quot;windmill-client&quot;</span></div>
<div class="a t" style="left:1196.2px;top:271.22px;font-size:24px;font-weight:400;color:#24292e;font-family:'Liberation Mono',monospace;"><span style="color:#c0394a">type</span><span style="color:#24292e"> </span><span style="color:#6a3fbf">Enums</span><span style="color:#24292e"> = {</span></div>
<div class="a t" style="left:1196.2px;top:303.22px;font-size:24px;font-weight:400;color:#24292e;font-family:'Liberation Mono',monospace;"><span style="color:#24292e">  [</span><span style="color:#2f6ac0">key</span><span style="color:#24292e">: </span><span style="color:#d4823f">string</span><span style="color:#24292e">]: </span><span style="color:#d4823f">string</span><span style="color:#24292e">[]</span></div>
<div class="a t" style="left:1196.2px;top:335.22px;font-size:24px;font-weight:400;color:#24292e;font-family:'Liberation Mono',monospace;"><span style="color:#24292e">}</span></div>
<div class="a t" style="left:1196.2px;top:399.22px;font-size:24px;font-weight:400;color:#24292e;font-family:'Liberation Mono',monospace;"><span style="color:#c0394a">type</span><span style="color:#24292e"> </span><span style="color:#6a3fbf">DefaultArgs</span><span style="color:#24292e"> = {</span></div>
<div class="a t" style="left:1196.2px;top:431.22px;font-size:24px;font-weight:400;color:#24292e;font-family:'Liberation Mono',monospace;"><span style="color:#24292e">  [</span><span style="color:#2f6ac0">key</span><span style="color:#24292e">: </span><span style="color:#d4823f">string</span><span style="color:#24292e">]: </span><span style="color:#d4823f">any</span></div>
<div class="a t" style="left:1196.2px;top:463.22px;font-size:24px;font-weight:400;color:#24292e;font-family:'Liberation Mono',monospace;"><span style="color:#24292e">}</span></div>
<div class="a" style="box-sizing:border-box;left:1178px;top:380px;width:1846px;height:264px;background:transparent;border-radius:0px;background:linear-gradient(to bottom, rgba(255,255,255,0) 0px, rgba(255,255,255,.55) 32px, rgba(255,255,255,.92) 100px, #fff 120px);"></div>
<div class="a t" style="left:2101px;top:498.02px;font-size:31.4px;font-weight:700;color:#2e3440;font-family:'Liberation Sans',sans-serif;transform:translateX(-50%);">Show all</div>
<svg class="a ic" style="left:2944.6px;top:226px;color:#2e3440;stroke-width:1.9;" width="30" height="30" viewBox="0 0 24 24"><rect width="8" height="4" x="8" y="2" rx="1" ry="1"/><path d="M8 4H6a2 2 0 0 0-2 2v14a2 2 0 0 0 2 2h12a2 2 0 0 0 2-2v-2"/><path d="M16 4h2a2 2 0 0 1 2 2v4"/><path d="M21 14H11"/><path d="m15 10-4 4 4 4"/></svg>
<div class="a" style="box-sizing:border-box;left:1178px;top:644px;width:1846px;height:2px;background:#e6e7ea;border-radius:0px;"></div>
<div class="a t" style="left:1212px;top:658.9px;font-size:29.4px;font-weight:400;color:#4b5563;font-family:'Liberation Sans',sans-serif;">Step Input</div>
<div class="a t" style="left:1411px;top:658.48px;font-size:29.9px;font-weight:400;color:#4b5563;font-family:'Liberation Sans',sans-serif;">Test this step</div>
<div class="a t" style="left:1651px;top:658.58px;font-size:29.78px;font-weight:400;color:#4b5563;font-family:'Liberation Sans',sans-serif;">Advanced</div>
<div class="a" style="box-sizing:border-box;left:1178px;top:705.5px;width:1846px;height:2px;background:#e6e7ea;border-radius:0px;"></div>
<div class="a" style="box-sizing:border-box;left:1179px;top:702px;width:199px;height:4.5px;background:#344158;border-radius:0px;"></div>
<div class="a" style="box-sizing:border-box;left:2285.5px;top:707px;width:2px;height:1006px;background:#e3e5e8;border-radius:0px;"></div>
<svg class="a ic" style="left:2084px;top:725px;color:#5b34c4;stroke-width:2;" width="28" height="28" viewBox="0 0 24 24"><path d="m21.64 3.64-1.28-1.28a1.21 1.21 0 0 0-1.72 0L2.36 18.64a1.21 1.21 0 0 0 0 1.72l1.28 1.28a1.2 1.2 0 0 0 1.72 0L21.64 5.36a1.2 1.2 0 0 0 0-1.72"/><path d="m14 7 3 3"/><path d="M5 6v4"/><path d="M19 14v4"/><path d="M10 2v2"/><path d="M7 8H3"/><path d="M21 16h-4"/><path d="M11 3H9"/></svg>
<div class="a t" style="left:2130.5px;top:731.62px;font-size:23.12px;font-weight:700;color:#4c2bb0;font-family:'Liberation Sans',sans-serif;">Fill inputs</div>
<div class="a" style="box-sizing:border-box;left:1212px;top:800px;width:1057px;height:164px;background:#fff;border-radius:12px;box-shadow:0 4px 8px -2px rgba(0,0,0,.12), 0 2px 4px -2px rgba(0,0,0,.06);"></div>
<div class="a t" style="left:1243.2px;top:811.96px;font-size:31.7px;font-weight:700;color:#2e3440;font-family:'Liberation Sans',sans-serif;">slackResourcePath</div>
<div class="a t" style="left:1538.7px;top:813.1px;font-size:28px;font-weight:700;color:#e0453a;font-family:'Liberation Sans',sans-serif;">*</div>
<div class="a t" style="left:1569.7px;top:817.44px;font-size:26.4px;font-weight:400;color:#4b5563;font-family:'Liberation Sans',sans-serif;font-style:italic;">string</div>
<div class="a" style="box-sizing:border-box;left:1893px;top:806px;width:79.8px;height:59.5px;background:#ede9fe;border-radius:14px;"></div>
<svg class="a ic" style="left:1918.9px;top:821.8px;color:#5b34c4;stroke-width:2;" width="28" height="28" viewBox="0 0 24 24"><path d="m21.64 3.64-1.28-1.28a1.21 1.21 0 0 0-1.72 0L2.36 18.64a1.21 1.21 0 0 0 0 1.72l1.28 1.28a1.2 1.2 0 0 0 1.72 0L21.64 5.36a1.2 1.2 0 0 0 0-1.72"/><path d="m14 7 3 3"/><path d="M5 6v4"/><path d="M19 14v4"/><path d="M10 2v2"/><path d="M7 8H3"/><path d="M21 16h-4"/><path d="M11 3H9"/></svg>
<div class="a" style="box-sizing:border-box;left:1989.8px;top:804.5px;width:131.7px;height:63px;background:#f3f4f6;border-radius:14px;"></div>
<div class="a" style="box-sizing:border-box;left:1993px;top:808px;width:68.5px;height:55.8px;background:#fff;border-radius:12px;box-shadow:0 2px 4px rgba(0,0,0,.12);"></div>
<div class="a t" style="left:2027.2px;top:822.1px;font-size:28px;font-weight:400;color:#2e3440;font-family:'Liberation Sans',sans-serif;transform:translateX(-50%);letter-spacing:0.4px;">${}</div>
<svg class="a ic" style="left:2083px;top:824.8px;color:#9ca3af;stroke-width:1.8;" width="22" height="22" viewBox="0 0 24 24"><rect width="18" height="18" x="3" y="3" rx="2" ry="2"/><path d="M9 17c2 0 2.8-1 2.8-2.8V10c0-2 1-3.3 3.2-3"/><path d="M9 11.2h5.7"/></svg>
<div class="a" style="box-sizing:border-box;left:2143px;top:810.8px;width:105px;height:50.4px;background:#fff;border-radius:12px;border:1px solid #d9dce1;"></div>
<svg class="a ic" style="left:2162px;top:821.8px;color:#2e3440;stroke-width:2;" width="28" height="28" viewBox="0 0 24 24"><path d="M12 22v-5"/><path d="M9 8V2"/><path d="M15 8V2"/><path d="M18 8v5a4 4 0 0 1-4 4h-4a4 4 0 0 1-4-4V8Z"/></svg>
<svg class="a ic" style="left:2207px;top:824.4px;color:#2e3440;stroke-width:2;" width="24" height="24" viewBox="0 0 24 24"><path d="M5 12h14"/><path d="m12 5 7 7-7 7"/></svg>
<div class="a" style="box-sizing:border-box;left:1232px;top:892.8px;width:1016px;height:44.2px;background:#fff;border-radius:8px;border:1px solid #e3e3e3;"></div>
<div class="a" style="box-sizing:border-box;left:1233px;top:893.8px;width:47px;height:42.2px;background:#f8f9fb;border-radius:0px;border-radius:8px 0 0 8px;"></div>
<div class="a" style="box-sizing:border-box;left:1280px;top:893.8px;width:2px;height:42.2px;background:#ededed;border-radius:0px;"></div>
<div class="a" style="box-sizing:border-box;left:1281px;top:893.8px;width:966px;height:8px;background:transparent;border-radius:0px;background:linear-gradient(#e6e6e6,rgba(255,255,255,0));"></div>
<div class="a" style="box-sizing:border-box;left:1281px;top:930.6px;width:966px;height:4.8px;background:#ececec;border-radius:0px;"></div>
<div class="a t" style="left:1251.2px;top:902.98px;font-size:29px;font-weight:700;color:#1a1f6e;font-family:'Liberation Mono',monospace;">1</div>
<div class="a" style="box-sizing:border-box;left:2217px;top:893.8px;width:0.6px;height:42.2px;background:#e8e8e8;border-radius:0px;"></div>
<div class="a" style="box-sizing:border-box;left:2217.6px;top:894.4px;width:27.2px;height:3.6px;background:#404040;border-radius:0px;"></div>
<div class="a" style="box-sizing:border-box;left:1280px;top:898px;width:2px;height:34px;background:#2e3440;border-radius:0px;"></div>
<div class="a t" style="left:1313.5px;top:903.54px;font-size:28px;font-weight:400;color:#111;font-family:'Liberation Mono',monospace;">u/alex/humorous_slack</div>
<div class="a t" style="left:1243.2px;top:1003.38px;font-size:32.14px;font-weight:700;color:#2e3440;font-family:'Liberation Sans',sans-serif;">channelId</div>
<div class="a t" style="left:1396.2px;top:1004.9px;font-size:28px;font-weight:700;color:#e0453a;font-family:'Liberation Sans',sans-serif;">*</div>
<div class="a t" style="left:1427.2px;top:1009.24px;font-size:26.4px;font-weight:400;color:#4b5563;font-family:'Liberation Sans',sans-serif;font-style:italic;">string</div>
<div class="a" style="box-sizing:border-box;left:1893px;top:997.8px;width:79.8px;height:59.5px;background:#ede9fe;border-radius:14px;"></div>
<svg class="a ic" style="left:1918.9px;top:1013.6px;color:#5b34c4;stroke-width:2;" width="28" height="28" viewBox="0 0 24 24"><path d="m21.64 3.64-1.28-1.28a1.21 1.21 0 0 0-1.72 0L2.36 18.64a1.21 1.21 0 0 0 0 1.72l1.28 1.28a1.2 1.2 0 0 0 1.72 0L21.64 5.36a1.2 1.2 0 0 0 0-1.72"/><path d="m14 7 3 3"/><path d="M5 6v4"/><path d="M19 14v4"/><path d="M10 2v2"/><path d="M7 8H3"/><path d="M21 16h-4"/><path d="M11 3H9"/></svg>
<div class="a" style="box-sizing:border-box;left:1989.8px;top:996.3px;width:131.7px;height:63px;background:#f3f4f6;border-radius:14px;"></div>
<div class="a" style="box-sizing:border-box;left:1993px;top:999.8px;width:68.5px;height:55.8px;background:#fff;border-radius:12px;box-shadow:0 2px 4px rgba(0,0,0,.12);"></div>
<div class="a t" style="left:2027.2px;top:1013.9px;font-size:28px;font-weight:400;color:#2e3440;font-family:'Liberation Sans',sans-serif;transform:translateX(-50%);letter-spacing:0.4px;">${}</div>
<svg class="a ic" style="left:2083px;top:1016.6px;color:#9ca3af;stroke-width:1.8;" width="22" height="22" viewBox="0 0 24 24"><rect width="18" height="18" x="3" y="3" rx="2" ry="2"/><path d="M9 17c2 0 2.8-1 2.8-2.8V10c0-2 1-3.3 3.2-3"/><path d="M9 11.2h5.7"/></svg>
<div class="a" style="box-sizing:border-box;left:2143px;top:1002.6px;width:105px;height:50.4px;background:#fff;border-radius:12px;border:1px solid #d9dce1;"></div>
<svg class="a ic" style="left:2162px;top:1013.6px;color:#2e3440;stroke-width:2;" width="28" height="28" viewBox="0 0 24 24"><path d="M12 22v-5"/><path d="M9 8V2"/><path d="M15 8V2"/><path d="M18 8v5a4 4 0 0 1-4 4h-4a4 4 0 0 1-4-4V8Z"/></svg>
<svg class="a ic" style="left:2207px;top:1016.2px;color:#2e3440;stroke-width:2;" width="24" height="24" viewBox="0 0 24 24"><path d="M5 12h14"/><path d="m12 5 7 7-7 7"/></svg>
<div class="a" style="box-sizing:border-box;left:1232px;top:1084.6px;width:1016px;height:44.2px;background:#fff;border-radius:8px;border:1px solid #e3e3e3;"></div>
<div class="a" style="box-sizing:border-box;left:1233px;top:1085.6px;width:47px;height:42.2px;background:#f8f9fb;border-radius:0px;border-radius:8px 0 0 8px;"></div>
<div class="a" style="box-sizing:border-box;left:1280px;top:1085.6px;width:2px;height:42.2px;background:#ededed;border-radius:0px;"></div>
<div class="a" style="box-sizing:border-box;left:1281px;top:1085.6px;width:966px;height:8px;background:transparent;border-radius:0px;background:linear-gradient(#e6e6e6,rgba(255,255,255,0));"></div>
<div class="a" style="box-sizing:border-box;left:1281px;top:1122.4px;width:966px;height:4.8px;background:#ececec;border-radius:0px;"></div>
<div class="a t" style="left:1251.2px;top:1094.78px;font-size:29px;font-weight:700;color:#1a1f6e;font-family:'Liberation Mono',monospace;">1</div>
<div class="a" style="box-sizing:border-box;left:2217px;top:1085.6px;width:0.6px;height:42.2px;background:#e8e8e8;border-radius:0px;"></div>
<div class="a" style="box-sizing:border-box;left:2217.6px;top:1086.2px;width:27.2px;height:3.6px;background:#404040;border-radius:0px;"></div>
<div class="a t" style="left:1280px;top:1095.34px;font-size:28px;font-weight:400;color:#111;font-family:'Liberation Mono',monospace;">customers</div>
<div class="a t" style="left:1243.2px;top:1196.3px;font-size:32.24px;font-weight:700;color:#2e3440;font-family:'Liberation Sans',sans-serif;">message</div>
<div class="a t" style="left:1400.2px;top:1202.24px;font-size:26.4px;font-weight:400;color:#4b5563;font-family:'Liberation Sans',sans-serif;font-style:italic;">string</div>
<div class="a" style="box-sizing:border-box;left:1479px;top:1192px;width:107px;height:41.8px;background:#dbe6fb;border-radius:8px;"></div>
<div class="a t" style="left:1532.5px;top:1201.04px;font-size:29px;font-weight:400;color:#2d4ca8;font-family:'Liberation Sans',sans-serif;transform:translateX(-50%);-webkit-text-stroke:0.6px #2d4ca8;">${…}</div>
<div class="a" style="box-sizing:border-box;left:1893px;top:1190.8px;width:79.8px;height:59.5px;background:#ede9fe;border-radius:14px;"></div>
<svg class="a ic" style="left:1918.9px;top:1206.6px;color:#5b34c4;stroke-width:2;" width="28" height="28" viewBox="0 0 24 24"><path d="m21.64 3.64-1.28-1.28a1.21 1.21 0 0 0-1.72 0L2.36 18.64a1.21 1.21 0 0 0 0 1.72l1.28 1.28a1.2 1.2 0 0 0 1.72 0L21.64 5.36a1.2 1.2 0 0 0 0-1.72"/><path d="m14 7 3 3"/><path d="M5 6v4"/><path d="M19 14v4"/><path d="M10 2v2"/><path d="M7 8H3"/><path d="M21 16h-4"/><path d="M11 3H9"/></svg>
<div class="a" style="box-sizing:border-box;left:1989.8px;top:1189.3px;width:131.7px;height:63px;background:#f3f4f6;border-radius:14px;"></div>
<div class="a" style="box-sizing:border-box;left:1993px;top:1192.8px;width:68.5px;height:55.8px;background:#fff;border-radius:12px;box-shadow:0 2px 4px rgba(0,0,0,.12);"></div>
<div class="a t" style="left:2027.2px;top:1206.9px;font-size:28px;font-weight:400;color:#2e3440;font-family:'Liberation Sans',sans-serif;transform:translateX(-50%);letter-spacing:0.4px;">${}</div>
<svg class="a ic" style="left:2083px;top:1209.6px;color:#9ca3af;stroke-width:1.8;" width="22" height="22" viewBox="0 0 24 24"><rect width="18" height="18" x="3" y="3" rx="2" ry="2"/><path d="M9 17c2 0 2.8-1 2.8-2.8V10c0-2 1-3.3 3.2-3"/><path d="M9 11.2h5.7"/></svg>
<div class="a" style="box-sizing:border-box;left:2143px;top:1195.6px;width:105px;height:50.4px;background:#fff;border-radius:12px;border:1px solid #d9dce1;"></div>
<svg class="a ic" style="left:2162px;top:1206.6px;color:#2e3440;stroke-width:2;" width="28" height="28" viewBox="0 0 24 24"><path d="M12 22v-5"/><path d="M9 8V2"/><path d="M15 8V2"/><path d="M18 8v5a4 4 0 0 1-4 4h-4a4 4 0 0 1-4-4V8Z"/></svg>
<svg class="a ic" style="left:2207px;top:1209.2px;color:#2e3440;stroke-width:2;" width="24" height="24" viewBox="0 0 24 24"><path d="M5 12h14"/><path d="m12 5 7 7-7 7"/></svg>
<div class="a" style="box-sizing:border-box;left:1232px;top:1277px;width:1016px;height:68px;background:#fff;border-radius:8px;border:1px solid #e3e3e3;"></div>
<div class="a" style="box-sizing:border-box;left:1233px;top:1278px;width:47px;height:66px;background:#f8f9fb;border-radius:0px;border-radius:8px 0 0 8px;"></div>
<div class="a" style="box-sizing:border-box;left:1280px;top:1278px;width:2px;height:66px;background:#ededed;border-radius:0px;"></div>
<div class="a" style="box-sizing:border-box;left:1281px;top:1278px;width:966px;height:8px;background:transparent;border-radius:0px;background:linear-gradient(#e6e6e6,rgba(255,255,255,0));"></div>
<div class="a" style="box-sizing:border-box;left:1281px;top:1315.8px;width:966px;height:4.8px;background:#ececec;border-radius:0px;"></div>
<div class="a t" style="left:1251.2px;top:1287.18px;font-size:29px;font-weight:700;color:#1a1f6e;font-family:'Liberation Mono',monospace;">1</div>
<div class="a" style="box-sizing:border-box;left:2217px;top:1278px;width:0.6px;height:66px;background:#e8e8e8;border-radius:0px;"></div>
<div class="a" style="box-sizing:border-box;left:2217.6px;top:1278.6px;width:27.2px;height:3.6px;background:#404040;border-radius:0px;"></div>
<div class="a" style="left:1280px;top:1276px;width:965px;height:60px;overflow:hidden">
<div class="a t" style="left:0px;top:11.34px;font-size:28px;font-weight:400;color:#111;font-family:'Liberation Mono',monospace;"><span style="color:#111">Refund request by _$</span><span style="color:#2340d0">{</span><span style="color:#111">flow_input</span><span style="color:#2f8a3a">[</span><span style="color:#111">"User email"</span><span style="color:#2f8a3a">]</span><span style="color:#2340d0">}</span><span style="color:#111">_ on order $</span></div>
</div>
<div class="a t" style="left:1243.2px;top:1401.1px;font-size:32.24px;font-weight:700;color:#2e3440;font-family:'Liberation Sans',sans-serif;">approver</div>
<div class="a t" style="left:1400.2px;top:1407.04px;font-size:26.4px;font-weight:400;color:#4b5563;font-family:'Liberation Sans',sans-serif;font-style:italic;">string</div>
<div class="a" style="box-sizing:border-box;left:1893px;top:1395.6px;width:79.8px;height:59.5px;background:#ede9fe;border-radius:14px;"></div>
<svg class="a ic" style="left:1918.9px;top:1411.4px;color:#5b34c4;stroke-width:2;" width="28" height="28" viewBox="0 0 24 24"><path d="m21.64 3.64-1.28-1.28a1.21 1.21 0 0 0-1.72 0L2.36 18.64a1.21 1.21 0 0 0 0 1.72l1.28 1.28a1.2 1.2 0 0 0 1.72 0L21.64 5.36a1.2 1.2 0 0 0 0-1.72"/><path d="m14 7 3 3"/><path d="M5 6v4"/><path d="M19 14v4"/><path d="M10 2v2"/><path d="M7 8H3"/><path d="M21 16h-4"/><path d="M11 3H9"/></svg>
<div class="a" style="box-sizing:border-box;left:1989.8px;top:1394.1px;width:131.7px;height:63px;background:#f3f4f6;border-radius:14px;"></div>
<div class="a" style="box-sizing:border-box;left:1993px;top:1397.6px;width:68.5px;height:55.8px;background:#fff;border-radius:12px;box-shadow:0 2px 4px rgba(0,0,0,.12);"></div>
<div class="a t" style="left:2027.2px;top:1411.7px;font-size:28px;font-weight:400;color:#2e3440;font-family:'Liberation Sans',sans-serif;transform:translateX(-50%);letter-spacing:0.4px;">${}</div>
<svg class="a ic" style="left:2083px;top:1414.4px;color:#9ca3af;stroke-width:1.8;" width="22" height="22" viewBox="0 0 24 24"><rect width="18" height="18" x="3" y="3" rx="2" ry="2"/><path d="M9 17c2 0 2.8-1 2.8-2.8V10c0-2 1-3.3 3.2-3"/><path d="M9 11.2h5.7"/></svg>
<div class="a" style="box-sizing:border-box;left:2143px;top:1400.4px;width:105px;height:50.4px;background:#fff;border-radius:12px;border:1px solid #d9dce1;"></div>
<svg class="a ic" style="left:2162px;top:1411.4px;color:#2e3440;stroke-width:2;" width="28" height="28" viewBox="0 0 24 24"><path d="M12 22v-5"/><path d="M9 8V2"/><path d="M15 8V2"/><path d="M18 8v5a4 4 0 0 1-4 4h-4a4 4 0 0 1-4-4V8Z"/></svg>
<svg class="a ic" style="left:2207px;top:1414px;color:#2e3440;stroke-width:2;" width="24" height="24" viewBox="0 0 24 24"><path d="M5 12h14"/><path d="m12 5 7 7-7 7"/></svg>
<div class="a" style="box-sizing:border-box;left:1232px;top:1482.4px;width:1016px;height:44.2px;background:#fff;border-radius:8px;border:1px solid #e3e3e3;"></div>
<div class="a" style="box-sizing:border-box;left:1233px;top:1483.4px;width:47px;height:42.2px;background:#f8f9fb;border-radius:0px;border-radius:8px 0 0 8px;"></div>
<div class="a" style="box-sizing:border-box;left:1280px;top:1483.4px;width:2px;height:42.2px;background:#ededed;border-radius:0px;"></div>
<div class="a" style="box-sizing:border-box;left:1281px;top:1483.4px;width:966px;height:8px;background:transparent;border-radius:0px;background:linear-gradient(#e6e6e6,rgba(255,255,255,0));"></div>
<div class="a" style="box-sizing:border-box;left:1281px;top:1520.2px;width:966px;height:4.8px;background:#ececec;border-radius:0px;"></div>
<div class="a t" style="left:1251.2px;top:1492.58px;font-size:29px;font-weight:700;color:#1a1f6e;font-family:'Liberation Mono',monospace;">1</div>
<div class="a" style="box-sizing:border-box;left:2217px;top:1483.4px;width:0.6px;height:42.2px;background:#e8e8e8;border-radius:0px;"></div>
<div class="a" style="box-sizing:border-box;left:2217.6px;top:1484px;width:27.2px;height:3.6px;background:#404040;border-radius:0px;"></div>
<div class="a t" style="left:1243.2px;top:1593.34px;font-size:32.2px;font-weight:700;color:#2e3440;font-family:'Liberation Sans',sans-serif;">defaultArgsJson</div>
<div class="a t" style="left:1516.2px;top:1598.9px;font-size:26.8px;font-weight:400;color:#4b5563;font-family:'Liberation Sans',sans-serif;font-style:italic;">object</div>
<div class="a" style="box-sizing:border-box;left:1876px;top:1587.8px;width:80px;height:59.5px;background:#ede9fe;border-radius:14px;"></div>
<svg class="a ic" style="left:1902px;top:1603.6px;color:#5b34c4;stroke-width:2;" width="28" height="28" viewBox="0 0 24 24"><path d="m21.64 3.64-1.28-1.28a1.21 1.21 0 0 0-1.72 0L2.36 18.64a1.21 1.21 0 0 0 0 1.72l1.28 1.28a1.2 1.2 0 0 0 1.72 0L21.64 5.36a1.2 1.2 0 0 0 0-1.72"/><path d="m14 7 3 3"/><path d="M5 6v4"/><path d="M19 14v4"/><path d="M10 2v2"/><path d="M7 8H3"/><path d="M21 16h-4"/><path d="M11 3H9"/></svg>
<div class="a" style="box-sizing:border-box;left:1975.4px;top:1586.3px;width:148px;height:63px;background:#f3f4f6;border-radius:14px;"></div>
<div class="a" style="box-sizing:border-box;left:1979.2px;top:1589.8px;width:84.8px;height:55.8px;background:#fff;border-radius:12px;box-shadow:0 2px 4px rgba(0,0,0,.12);"></div>
<div class="a t" style="left:2021.6px;top:1603.94px;font-size:24.4px;font-weight:700;color:#2e3440;font-family:'Liberation Sans',sans-serif;transform:translateX(-50%);">Static</div>
<svg class="a ic" style="left:2083px;top:1606.6px;color:#9ca3af;stroke-width:1.8;" width="22" height="22" viewBox="0 0 24 24"><rect width="18" height="18" x="3" y="3" rx="2" ry="2"/><path d="M9 17c2 0 2.8-1 2.8-2.8V10c0-2 1-3.3 3.2-3"/><path d="M9 11.2h5.7"/></svg>
<div class="a" style="box-sizing:border-box;left:2143px;top:1592.6px;width:105px;height:50.4px;background:#fff;border-radius:12px;border:1px solid #d9dce1;"></div>
<svg class="a ic" style="left:2162px;top:1603.6px;color:#2e3440;stroke-width:2;" width="28" height="28" viewBox="0 0 24 24"><path d="M12 22v-5"/><path d="M9 8V2"/><path d="M15 8V2"/><path d="M18 8v5a4 4 0 0 1-4 4h-4a4 4 0 0 1-4-4V8Z"/></svg>
<svg class="a ic" style="left:2207px;top:1606.2px;color:#2e3440;stroke-width:2;" width="24" height="24" viewBox="0 0 24 24"><path d="M5 12h14"/><path d="m12 5 7 7-7 7"/></svg>
<div class="a" style="box-sizing:border-box;left:1227.4px;top:1659.4px;width:1025.2px;height:44.2px;background:#fff;border-radius:0px;border:1px solid #e3e3e3;"></div>
<div class="a" style="box-sizing:border-box;left:1228.4px;top:1660.4px;width:47px;height:42.2px;background:#f8f9fb;border-radius:0px;border-radius:0px 0 0 0px;"></div>
<div class="a" style="box-sizing:border-box;left:1275.4px;top:1660.4px;width:2px;height:42.2px;background:#ededed;border-radius:0px;"></div>
<div class="a" style="box-sizing:border-box;left:1276.4px;top:1660.4px;width:975.2px;height:8px;background:transparent;border-radius:0px;background:linear-gradient(#e6e6e6,rgba(255,255,255,0));"></div>
<div class="a" style="box-sizing:border-box;left:1276.4px;top:1697.2px;width:975.2px;height:4.8px;background:#ececec;border-radius:0px;"></div>
<div class="a t" style="left:1246.6px;top:1669.58px;font-size:29px;font-weight:700;color:#1a1f6e;font-family:'Liberation Mono',monospace;">1</div>
<div class="a" style="box-sizing:border-box;left:2221.6px;top:1660.4px;width:0.6px;height:42.2px;background:#e8e8e8;border-radius:0px;"></div>
<div class="a" style="box-sizing:border-box;left:2222.2px;top:1661px;width:27.2px;height:3.6px;background:#404040;border-radius:0px;"></div>
<div class="a" style="box-sizing:border-box;left:2301.8px;top:722.8px;width:707.8px;height:65.8px;background:#fafafa;border-radius:16px;border:1px solid #cfd3d8;"></div>
<div class="a t" style="left:2319.2px;top:740.52px;font-size:29.38px;font-weight:400;color:#6b7280;font-family:'Liberation Sans',sans-serif;">Search prop...</div>
<div class="a" style="box-sizing:border-box;left:2293px;top:798.8px;width:725px;height:909.2px;background:#f3f4f6;border-radius:0px;"></div>
<div class="a t" style="left:2309.8px;top:813.74px;font-size:28px;font-weight:400;color:#374151;font-family:'Liberation Mono',monospace;">flow_input</div>
<div class="a" style="box-sizing:border-box;left:2312px;top:856.4px;width:151.5px;height:28px;background:#fff;border-radius:8px;border:1px solid #e5e7eb;"></div>
<div class="a t" style="left:2322px;top:858.72px;font-size:22.3px;font-weight:400;color:#111;font-family:'Liberation Mono',monospace;">User email</div>
<div class="a t" style="left:2470px;top:860.14px;font-size:22px;font-weight:400;color:#4b5563;font-family:'Liberation Mono',monospace;">:</div>
<div class="a t" style="left:2488px;top:857.14px;font-size:22px;font-weight:700;color:#2f9e44;font-family:'Liberation Mono',monospace;">&quot;&quot;</div>
<div class="a" style="box-sizing:border-box;left:2312px;top:897.5px;width:179.2px;height:28.5px;background:#fff;border-radius:8px;border:1px solid #e5e7eb;"></div>
<div class="a t" style="left:2322px;top:901.52px;font-size:22.3px;font-weight:400;color:#111;font-family:'Liberation Mono',monospace;">Order number</div>
<div class="a t" style="left:2497px;top:902.74px;font-size:22px;font-weight:400;color:#4b5563;font-family:'Liberation Mono',monospace;">:</div>
<div class="a t" style="left:2515px;top:900.14px;font-size:22px;font-weight:700;color:#2f9e44;font-family:'Liberation Mono',monospace;">&quot;&quot;</div>
<div class="a t" style="left:2309px;top:993.82px;font-size:25.24px;font-weight:400;color:#374151;font-family:'Liberation Sans',sans-serif;">Variables:</div>
<div class="a" style="box-sizing:border-box;left:2430px;top:992px;width:56px;height:29.2px;background:#fff;border-radius:8px;border:1px solid #e5e7eb;"></div>
<div class="a t" style="left:2458px;top:994.08px;font-size:24px;font-weight:400;color:#111;font-family:'Liberation Sans',sans-serif;transform:translateX(-50%);">{…}</div>
<div class="a t" style="left:2309px;top:1058.26px;font-size:24.72px;font-weight:400;color:#374151;font-family:'Liberation Sans',sans-serif;">Resources:</div>
<div class="a" style="box-sizing:border-box;left:2445px;top:1056px;width:55px;height:29.2px;background:#fff;border-radius:8px;border:1px solid #e5e7eb;"></div>
<div class="a t" style="left:2472.5px;top:1058.08px;font-size:24px;font-weight:400;color:#111;font-family:'Liberation Sans',sans-serif;transform:translateX(-50%);">{…}</div>
<div class="a" style="box-sizing:border-box;left:0px;top:0px;width:3024px;height:1.2px;background:#bdbdbd;border-radius:0px;"></div>
</div>
<script>(function(){var w=window.innerWidth;if(w&&Math.abs(w-3024)>2){var s=w/3024;var a=document.getElementById('app');a.style.transformOrigin='0 0';a.style.transform='scale('+s+')';document.body.style.width=w+'px';document.body.style.height=(1720*s)+'px';}})();</script>
</body></html>
